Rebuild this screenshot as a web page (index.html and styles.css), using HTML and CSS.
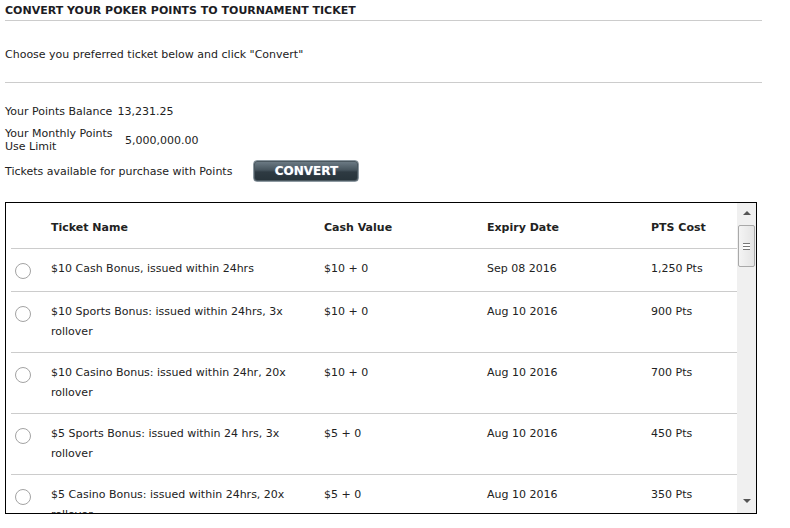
FILE: index.html
```html
<!DOCTYPE html>
<html lang="en">
<head>
    <meta charset="UTF-8">
    <title>Convert Poker Points</title>
    <link rel="stylesheet" href="styles.css">
</head>
<body>
    <div class="page">
        <h1 class="title">CONVERT YOUR POKER POINTS TO TOURNAMENT TICKET</h1>
        <p class="intro">Choose you preferred ticket below and click "Convert"</p>

        <div class="balance">
            <div class="stat">
                <span class="stat-label">Your Points Balance</span>
                <span class="stat-value">13,231.25</span>
            </div>
            <div class="stat stat-limit">
                <span class="stat-label">Your Monthly Points Use Limit</span>
                <span class="stat-value">5,000,000.00</span>
            </div>
            <div class="stat stat-tickets">
                <span class="stat-label">Tickets available for purchase with Points</span>
                <button class="convert-btn">CONVERT</button>
            </div>
        </div>

        <div class="ticket-box">
            <div class="ticket-list">
                <div class="row head">
                    <div></div>
                    <div>Ticket Name</div>
                    <div>Cash Value</div>
                    <div>Expiry Date</div>
                    <div>PTS Cost</div>
                </div>
                <div class="row">
                    <div><span class="radio"></span></div>
                    <div class="name">$10 Cash Bonus, issued within 24hrs</div>
                    <div>$10 + 0</div>
                    <div>Sep 08 2016</div>
                    <div>1,250 Pts</div>
                </div>
                <div class="row">
                    <div><span class="radio"></span></div>
                    <div class="name">$10 Sports Bonus: issued within 24hrs, 3x rollover</div>
                    <div>$10 + 0</div>
                    <div>Aug 10 2016</div>
                    <div>900 Pts</div>
                </div>
                <div class="row">
                    <div><span class="radio"></span></div>
                    <div class="name">$10 Casino Bonus: issued within 24hr, 20x rollover</div>
                    <div>$10 + 0</div>
                    <div>Aug 10 2016</div>
                    <div>700 Pts</div>
                </div>
                <div class="row">
                    <div><span class="radio"></span></div>
                    <div class="name">$5 Sports Bonus: issued within 24 hrs, 3x rollover</div>
                    <div>$5 + 0</div>
                    <div>Aug 10 2016</div>
                    <div>450 Pts</div>
                </div>
                <div class="row">
                    <div><span class="radio"></span></div>
                    <div class="name">$5 Casino Bonus: issued within 24hrs, 20x rollover</div>
                    <div>$5 + 0</div>
                    <div>Aug 10 2016</div>
                    <div>350 Pts</div>
                </div>
            </div>
            <div class="scrollbar">
                <span class="arrow up"></span>
                <span class="thumb"><span class="grip"></span></span>
                <span class="track"></span>
                <span class="arrow down"></span>
            </div>
        </div>
    </div>
</body>
</html>
```

FILE: styles.css
```css
body {
    margin: 0;
    padding: 0;
    background: #fff;
    font-family: "DejaVu Sans", Verdana, sans-serif;
    font-size: 11px;
    color: #222;
}

.page {
    width: 757px;
    padding: 4px 0 0 5px;
}

.title {
    margin: 0;
    font-size: 11px;
    font-weight: bold;
    line-height: 13px;
    padding-bottom: 3px;
    border-bottom: 1px solid #ccc;
    color: #1c1c24;
}

.intro {
    margin: 0;
    padding: 27px 0 21px;
    line-height: 13px;
    border-bottom: 1px solid #ccc;
}

.balance {
    padding-top: 22px;
}

.stat {
    display: flex;
    align-items: center;
    line-height: 13px;
}

.stat-value {
    margin-left: 5px;
}

.stat-limit {
    margin-top: 9px;
}

.stat-limit .stat-label {
    width: 112px;
}

.stat-limit .stat-value {
    margin-left: 8px;
}

.stat-tickets {
    margin-top: 7px;
}

.convert-btn {
    margin-left: 21px;
    width: 106px;
    height: 22px;
    padding: 0;
    border: 1px solid #8d99a1;
    border-radius: 4px;
    background: linear-gradient(#6f7e88, #46545d 45%, #2e3a42 55%, #27333a);
    box-shadow: inset 0 0 0 1px #4b5860;
    color: #fff;
    font-family: "DejaVu Sans", Verdana, sans-serif;
    font-size: 12px;
    font-weight: bold;
    text-shadow: 0 0 1px #8fa6c0;
}

.ticket-box {
    display: flex;
    margin-top: 20px;
    width: 750px;
    height: 310px;
    border: 1px solid #000;
}

.ticket-list {
    flex: 1;
    overflow: hidden;
    padding-left: 5px;
}

.row {
    display: grid;
    grid-template-columns: 40px 273px 163px 164px 1fr;
    align-items: start;
    padding: 10px 0;
    line-height: 20px;
    border-bottom: 1px solid #ccc;
}

.row.head {
    padding: 15px 0 10px;
    font-weight: bold;
}

.name {
    padding-right: 22px;
}

.radio {
    display: block;
    width: 14px;
    height: 14px;
    margin: 4px 0 2px 4px;
    border: 1px solid #a3a3a3;
    border-radius: 50%;
    background: #fff;
}

.scrollbar {
    width: 19px;
    display: flex;
    flex-direction: column;
    align-items: center;
    background: #f0f0f0;
}

.arrow {
    width: 0;
    height: 0;
    border-left: 4px solid transparent;
    border-right: 4px solid transparent;
}

.arrow.up {
    margin-top: 8px;
    border-bottom: 4px solid #555;
}

.arrow.down {
    margin-bottom: 10px;
    border-top: 4px solid #555;
}

.thumb {
    display: flex;
    align-items: center;
    justify-content: center;
    margin-top: 10px;
    width: 15px;
    height: 40px;
    border: 1px solid #a9a9a9;
    border-radius: 2px;
    background: linear-gradient(90deg, #f4f4f4, #e4e4e4);
}

.grip {
    width: 7px;
    height: 5px;
    border-top: 1px solid #777;
    border-bottom: 1px solid #777;
    background: linear-gradient(#fff 2px, #777 2px, #777 3px, #fff 3px);
}

.track {
    flex: 1;
}
```
